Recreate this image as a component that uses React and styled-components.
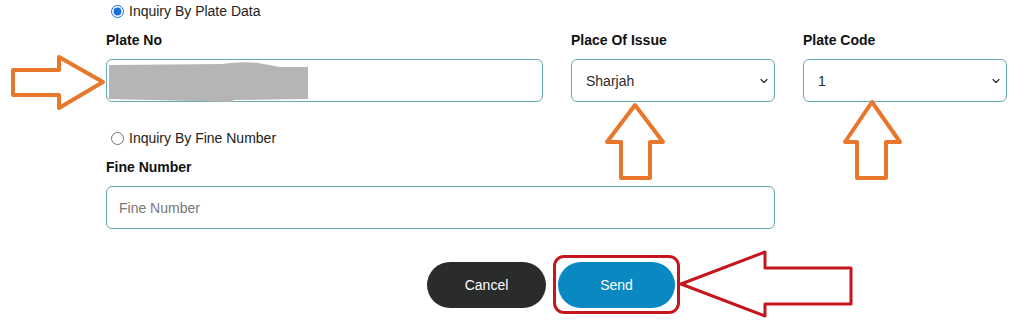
import styled, { createGlobalStyle } from 'styled-components'
import { ChevronDown } from 'lucide-react'

const GlobalStyle = createGlobalStyle`
  body {
    margin: 0;
    background: #fff;
    font-family: "Liberation Sans", Arial, sans-serif;
    color: #222;
  }
`

const Page = styled.div`
  position: relative;
  width: 1024px;
  height: 324px;
  overflow: hidden;
  background: #fff;
`

const Form = styled.div`
  padding-left: 106px;
  width: 901px;
`

const RadioRow = styled.label`
  display: flex;
  align-items: center;
  gap: 5px;
  height: 22px;
  padding-left: 5px;
  margin-top: ${(p) => p.$top || 0}px;
  font-size: 14px;
  color: #222;

  input {
    margin: 0;
    width: 13px;
    height: 13px;
    accent-color: #1a6fd6;
  }
`

const Grid = styled.div`
  display: grid;
  grid-template-columns: 437px 204px 204px;
  column-gap: 28px;
  margin-top: 8px;
`

const Field = styled.div`
  display: flex;
  flex-direction: column;
  grid-column: ${(p) => p.$span || 'auto'};
`

const Label = styled.div`
  font-size: 14px;
  font-weight: bold;
  color: #111;
  height: 20px;
  line-height: 20px;
  margin-bottom: 9px;
`

const Input = styled.div`
  box-sizing: border-box;
  height: 43px;
  border: 1.5px solid #66aab4;
  border-radius: 6px;
  display: flex;
  align-items: center;
  justify-content: space-between;
  padding: 0 4px 0 ${(p) => p.$pad || 12}px;
  font-size: 14px;
  color: ${(p) => (p.$placeholder ? '#777' : '#2a2a2a')};
  background: #fff;

  svg {
    color: #333;
  }
`

const Buttons = styled.div`
  display: flex;
  align-items: center;
  gap: 7px;
  padding-left: 427px;
  margin-top: 26px;
`

const Button = styled.div`
  width: ${(p) => p.$w}px;
  height: 46px;
  border-radius: 23px;
  background: ${(p) => p.$bg};
  color: #fff;
  font-size: 14px;
  display: flex;
  align-items: center;
  justify-content: center;
`

const Highlight = styled.div`
  border: 3px solid #c4161c;
  border-radius: 11px;
  padding: 4px 2px 3px 2px;
`

const Overlay = styled.svg`
  position: absolute;
  inset: 0;
  pointer-events: none;
`

function App() {
  return (
    <Page>
      <GlobalStyle />
      <Form>
        <RadioRow>
          <input type="radio" name="mode" defaultChecked />
          Inquiry By Plate Data
        </RadioRow>
        <Grid>
          <Field>
            <Label>Plate No</Label>
            <Input />
          </Field>
          <Field>
            <Label>Place Of Issue</Label>
            <Input $pad={14}>
              Sharjah
              <ChevronDown size={12} strokeWidth={2.5} />
            </Input>
          </Field>
          <Field>
            <Label>Plate Code</Label>
            <Input $pad={14}>
              1
              <ChevronDown size={12} strokeWidth={2.5} />
            </Input>
          </Field>
        </Grid>
        <RadioRow $top={25}>
          <input type="radio" name="mode" />
          Inquiry By Fine Number
        </RadioRow>
        <Grid>
          <Field $span="span 2">
            <Label>Fine Number</Label>
            <Input $placeholder>Fine Number</Input>
          </Field>
        </Grid>
      </Form>
      <Buttons>
        <Button $w={119} $bg="#2a2b2b">Cancel</Button>
        <Highlight>
          <Button $w={117} $bg="#0a88c2">Send</Button>
        </Highlight>
      </Buttons>

      <Overlay width="1024" height="324" viewBox="0 0 1024 324">
        <path
          d="M109,65 L222,64 Q240,61 258,63 L280,67 L308,67 L308,99 L233,100 L233,102 L109,99 Z"
          fill="#b5b5b5"
        />
        <g fill="none" stroke="#e8772b" strokeWidth="4" strokeLinejoin="round">
          <polygon points="13,70 59,70 59,57 103,82 59,108 59,95 13,95" />
          <polygon points="635,105 663,142 650,142 650,178 621,178 621,142 607,142" />
          <polygon points="872,102 900,142 886,142 886,178 857,178 857,142 845,142" />
        </g>
        <polygon
          points="681,284 765,252 765,268 851,268 851,304 765,304 765,316"
          fill="none"
          stroke="#c4161c"
          strokeWidth="3"
          strokeLinejoin="round"
        />
      </Overlay>
    </Page>
  )
}

export default App
